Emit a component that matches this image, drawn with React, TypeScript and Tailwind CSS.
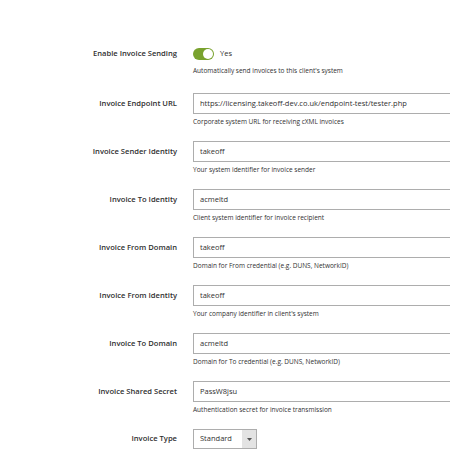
import React from 'react'

type Field = {
  label: string
  value: string
  note: string
}

const FIELDS: Field[] = [
  { label: 'Invoice Endpoint URL', value: 'https://licensing.takeoff-dev.co.uk/endpoint-test/tester.php', note: 'Corporate system URL for receiving cXML invoices' },
  { label: 'Invoice Sender Identity', value: 'takeoff', note: 'Your system identifier for invoice sender' },
  { label: 'Invoice To Identity', value: 'acmeltd', note: 'Client system identifier for invoice recipient' },
  { label: 'Invoice From Domain', value: 'takeoff', note: 'Domain for From credential (e.g. DUNS, NetworkID)' },
  { label: 'Invoice From Identity', value: 'takeoff', note: "Your company identifier in client's system" },
  { label: 'Invoice To Domain', value: 'acmeltd', note: 'Domain for To credential (e.g. DUNS, NetworkID)' },
  { label: 'Invoice Shared Secret', value: 'PassW8jsu', note: 'Authentication secret for invoice transmission' },
]

function Label({ children, h }: { children: React.ReactNode; h: string }) {
  return (
    <div className={`w-[177px] shrink-0 text-right font-semibold text-[7.6px] text-[#303030] flex items-center justify-end whitespace-nowrap ${h}`}>
      {children}
    </div>
  )
}

function Note({ children }: { children: React.ReactNode }) {
  return <div className="mt-[3px] text-[6.5px] leading-[9px] text-[#303030] whitespace-nowrap">{children}</div>
}

export default function App() {
  return (
    <div className="w-[450px] h-[450px] overflow-hidden bg-white font-['Open_Sans',sans-serif]">
      <div className="pt-[45px]">
        {/* Toggle */}
        <div className="flex mb-[18px]">
          <Label h="h-[18px]">Enable Invoice Sending</Label>
          <div className="ml-[16px]">
            <div className="h-[18px] flex items-center gap-[6px]">
              <div className="w-[21px] h-[12px] rounded-full bg-[#79a22e] relative">
                <div className="absolute right-[1px] top-[1px] w-[10px] h-[10px] rounded-full bg-white" />
              </div>
              <span className="text-[7.5px] text-[#303030]">Yes</span>
            </div>
            <Note>Automatically send invoices to this client's system</Note>
          </div>
        </div>

        {FIELDS.map(f => (
          <div key={f.label} className="flex mb-[15px]">
            <Label h="h-[21px]">{f.label}</Label>
            <div className="ml-[16px]">
              <div className="w-[300px] h-[21px] border border-[#adadad] flex items-center pl-[6px] text-[7.5px] text-[#303030] whitespace-nowrap">
                {f.value}
              </div>
              <Note>{f.note}</Note>
            </div>
          </div>
        ))}

        {/* Select */}
        <div className="flex">
          <Label h="h-[20px]">Invoice Type</Label>
          <div className="ml-[16px] flex h-[20px] border border-[#adadad]">
            <div className="w-[48px] flex items-center pl-[6px] text-[7.5px] text-[#303030]">Standard</div>
            <div className="w-[14px] bg-[#e3e3e3] flex items-center justify-center">
              <svg width="5" height="3" viewBox="0 0 5 3">
                <path d="M0 0 L5 0 L2.5 3 Z" fill="#555" />
              </svg>
            </div>
          </div>
        </div>
      </div>
    </div>
  )
}
